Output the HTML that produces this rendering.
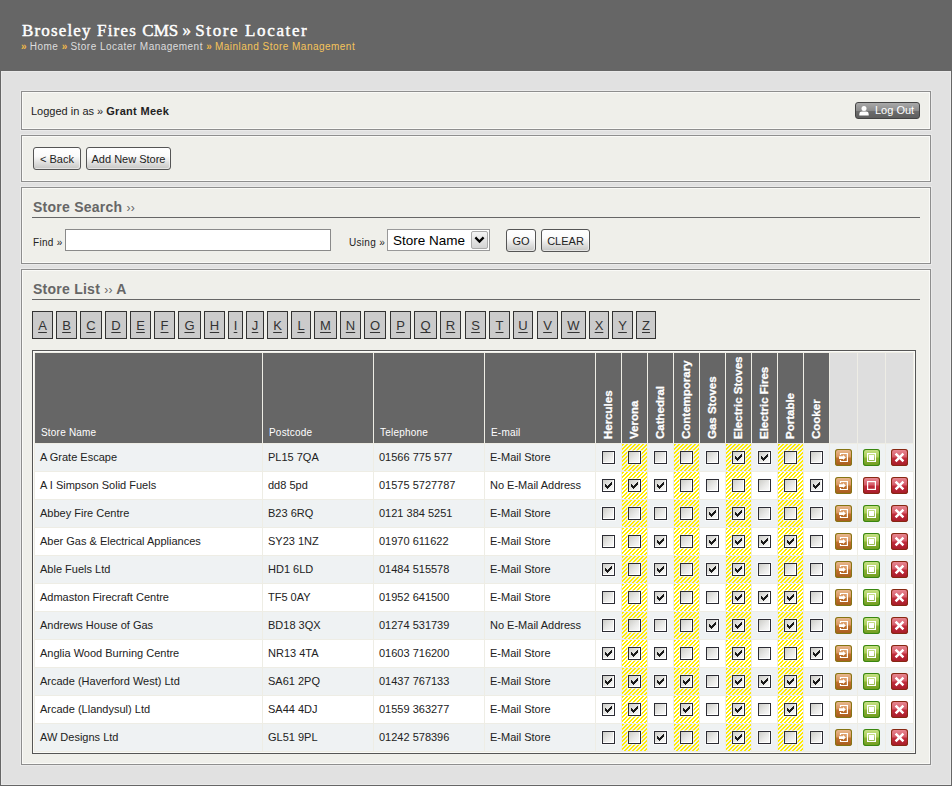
<!DOCTYPE html><html><head><meta charset="utf-8"><title>Broseley Fires CMS</title><style>
*{margin:0;padding:0;box-sizing:border-box}
html,body{width:952px;height:786px;overflow:hidden;background:#666;font-family:"Liberation Sans",sans-serif}
#hdr{position:absolute;left:0;top:0;width:952px;height:71px;background:#666}
#title{position:absolute;left:22px;top:21px;font-family:"Liberation Serif",serif;font-weight:normal;-webkit-text-stroke:0.45px #fff;font-size:17px;line-height:20px;color:#fff;letter-spacing:1.16px;white-space:nowrap}
#crumb{position:absolute;left:21px;top:41px;font-size:10px;line-height:12px;color:#ddd;letter-spacing:0.47px;white-space:nowrap}
#crumb .o{color:#f5c45a}
#crumb .r{color:#f0b84a;font-weight:bold;letter-spacing:0}
#main{position:absolute;left:1px;top:71px;width:950px;height:714px;background:#e1e1e1;box-shadow:inset 0 0 0 1px #e9e9e9}
.box{position:absolute;left:20px;width:910px;background:#efefea;border:1px solid #8e8e8e;box-shadow:0 0 0 1px #eaeaea,inset 1px 1px 0 #fafaf7,inset -1px -1px 0 #fafaf7}
#b1{top:20px;height:39px}
#b2{top:64px;height:47px}
#b3{top:116px;height:77px}
#b4{top:198px;height:496px}
#logged{position:absolute;left:9px;top:13px;font-size:11px;line-height:13px;color:#222;white-space:nowrap}
#logged b{color:#222;letter-spacing:0.3px}
#logout{position:absolute;left:833px;top:10px;width:65px;height:17px;border:1px solid #444;border-radius:3px;background:linear-gradient(#a9a9a9,#8c8c8c 50%,#6e6e6e 51%,#5e5e5e);color:#fff;font-size:11px;line-height:15px;white-space:nowrap}
#logout svg{position:absolute;left:3px;top:3px}
#logout span{position:absolute;left:19px;top:0px}
.btn{position:absolute;height:23px;border:1px solid #555;border-radius:3px;background:linear-gradient(#fff,#fafafa 40%,#c6c6c4);box-shadow:inset -1px -1px 0 rgba(255,255,255,.5);color:#222;font-size:11px;line-height:23px;text-align:center;white-space:nowrap}
#back{left:11px;top:11px;width:48px}
#addnew{left:64px;top:11px;width:85px}
.hd{position:absolute;left:11px;font-weight:bold;font-size:14px;line-height:16px;color:#666;letter-spacing:0.25px;white-space:nowrap}
.hd .rq{font-weight:normal;font-size:12px}
.hr{position:absolute;left:10px;width:888px;height:1px;background:#666}
#hd3{top:11px}
#hr3{top:29px}
.lbl{position:absolute;font-size:10px;line-height:12px;color:#222;letter-spacing:0.3px;white-space:nowrap}
#find{left:11px;top:49px}
#using{left:327px;top:49px}
#inp{position:absolute;left:43px;top:41px;width:266px;height:22px;background:#fff;border:1px solid #8a8a8a}
#sel{position:absolute;left:365px;top:41px;width:103px;height:22px;background:#fff;border:1px solid #999}
#sel span{position:absolute;left:5px;top:3px;font-size:13.5px;line-height:15px;color:#000;white-space:nowrap}
#selbtn{position:absolute;left:83px;top:1px;width:17px;height:18px;border:1px solid #aaa;border-radius:2px;background:linear-gradient(#f4f4f4,#d4d4d4)}
#selbtn svg{position:absolute;left:-1px;top:-1px}
#go{left:484px;top:41px;width:30px}
#clear{left:519px;top:41px;width:49px}
#hd4{top:11px}
#hr4{top:29px}
.lt{position:absolute;top:41px;height:28px;border:1px solid #333;background:#cbcbcb;color:#333;font-size:13px;line-height:28px;text-align:center}
.lt u{text-decoration:underline;text-underline-offset:2px}
#tbl{position:absolute;left:31px;top:279px;width:884px;height:404px;border:1px solid #555;background:#fbfbf8;padding:1px}
table{border-collapse:separate;border-spacing:1px;background:#eeede5;table-layout:fixed;width:880px}
td,th{padding:0;overflow:hidden}
tr.th th{height:90px;background:#666;color:#fff;vertical-align:bottom;text-align:left;font-weight:normal}
th.tx span{display:block;padding:0 0 4px 6px;font-size:10px;line-height:12px;letter-spacing:0.2px;white-space:nowrap}
th.vt{position:relative}
th.vt span{position:absolute;left:5px;top:86px;-webkit-text-stroke:0.3px #fff;transform-origin:0 0;transform:rotate(-90deg);font-weight:bold;font-size:11.5px;line-height:14px;white-space:nowrap}
th.ih{background:#dedede !important}
tr td{height:27px}
tr.odd td{background:#eff2f3}
tr.even td{background:#fff}
td.t{padding:7px 0 0 5px;vertical-align:top;line-height:13px;font-size:11px;color:#222;white-space:nowrap}
td.c{text-align:center;vertical-align:middle;position:relative}
td.st{background-image:repeating-linear-gradient(135deg,#ffec00 0,#ffec00 1.7px,transparent 1.7px,transparent 2.83px) !important}
.cb{display:block;position:absolute;left:6px;top:7px;width:13px;height:13px;border:1px solid #2c2c34;background:linear-gradient(135deg,#cdcdc8 0%,#e8e8e6 50%,#fdfdfd 100%);box-shadow:0 0 0 1px rgba(255,255,255,.55),inset -1px -1px 0 #fff}
.cb svg{position:absolute;left:-1px;top:-1px}
.ic{display:block;position:absolute;left:5px;top:5px;width:17px;height:17px;border-radius:3px}
.ic svg{position:absolute;left:0;top:0}
.ic-o{background:linear-gradient(#e9bb92,#d9955e 48%,#c0712f 52%,#a65b1d);box-shadow:inset 0 0 0 1px #857514}
.ic-g{background:linear-gradient(#c9e28a,#a9cc55 48%,#8cb232 52%,#6f9b22);box-shadow:inset 0 0 0 1px #38860f}
.ic-r{background:linear-gradient(#ea8c96,#d45a68 48%,#c22c3c 52%,#a51b28);box-shadow:inset 0 0 0 1px #862812}

</style></head><body>
<div id="hdr"><div id="title">Broseley Fires <span style="letter-spacing:0">CMS</span><span style="letter-spacing:0"> &raquo; </span><span style="letter-spacing:1.62px">Store Locater</span></div>
<div id="crumb"><span class="r">&raquo;</span> Home <span class="r">&raquo;</span> Store Locater Management <span class="r">&raquo;</span><span class="o"> Mainland Store Management</span></div></div>
<div id="main">
<div class="box" id="b1"><div id="logged">Logged in as &raquo; <b>Grant Meek</b></div>
<div id="logout"><svg width="10" height="10" viewBox="0 0 10 10"><ellipse cx="5" cy="2.5" rx="2.5" ry="2.5" fill="#fff"/><path d="M0.3 9.6V8Q0.3 5.6 2.8 5.6H7.2Q9.7 5.6 9.7 8V9.6Z" fill="#fff"/></svg><span>Log Out</span></div></div>
<div class="box" id="b2"><div class="btn" id="back">&lt; Back</div><div class="btn" id="addnew">Add New Store</div></div>
<div class="box" id="b3"><div class="hd" id="hd3">Store Search <span class="rq">&rsaquo;&rsaquo;</span></div><div class="hr" id="hr3"></div>
<div class="lbl" id="find">Find &raquo;</div><div id="inp"></div><div class="lbl" id="using">Using &raquo;</div>
<div id="sel"><span>Store Name</span><div id="selbtn"><svg width="16" height="18" viewBox="0 0 16 18"><path d="M5.2 7.2 L8.5 10.5 L11.8 7.2" fill="none" stroke="#000" stroke-width="2.3" stroke-linecap="square"/></svg></div></div>
<div class="btn" id="go">GO</div><div class="btn" id="clear">CLEAR</div></div>
<div class="box" id="b4"><div class="hd" id="hd4">Store List <span class="rq">&rsaquo;&rsaquo;</span> A</div><div class="hr" id="hr4"></div>
<div class="lt" style="left:10px;width:21px"><u>A</u></div>
<div class="lt" style="left:34px;width:21px"><u>B</u></div>
<div class="lt" style="left:58px;width:22px"><u>C</u></div>
<div class="lt" style="left:83px;width:22px"><u>D</u></div>
<div class="lt" style="left:108px;width:21px"><u>E</u></div>
<div class="lt" style="left:132px;width:21px"><u>F</u></div>
<div class="lt" style="left:156px;width:23px"><u>G</u></div>
<div class="lt" style="left:182px;width:21px"><u>H</u></div>
<div class="lt" style="left:206px;width:15px"><u>I</u></div>
<div class="lt" style="left:224px;width:18px"><u>J</u></div>
<div class="lt" style="left:245px;width:21px"><u>K</u></div>
<div class="lt" style="left:269px;width:20px"><u>L</u></div>
<div class="lt" style="left:292px;width:23px"><u>M</u></div>
<div class="lt" style="left:318px;width:21px"><u>N</u></div>
<div class="lt" style="left:342px;width:22px"><u>O</u></div>
<div class="lt" style="left:368px;width:21px"><u>P</u></div>
<div class="lt" style="left:392px;width:23px"><u>Q</u></div>
<div class="lt" style="left:418px;width:21px"><u>R</u></div>
<div class="lt" style="left:443px;width:21px"><u>S</u></div>
<div class="lt" style="left:467px;width:21px"><u>T</u></div>
<div class="lt" style="left:491px;width:20px"><u>U</u></div>
<div class="lt" style="left:515px;width:21px"><u>V</u></div>
<div class="lt" style="left:539px;width:25px"><u>W</u></div>
<div class="lt" style="left:567px;width:20px"><u>X</u></div>
<div class="lt" style="left:590px;width:21px"><u>Y</u></div>
<div class="lt" style="left:614px;width:20px"><u>Z</u></div>
</div>
<div id="tbl"><table cellspacing="1"><colgroup>
<col style="width:227px">
<col style="width:110px">
<col style="width:110px">
<col style="width:110px">
<col style="width:25px">
<col style="width:25px">
<col style="width:25px">
<col style="width:25px">
<col style="width:25px">
<col style="width:25px">
<col style="width:25px">
<col style="width:25px">
<col style="width:25px">
<col style="width:27px">
<col style="width:27px">
<col style="width:27px">
</colgroup><tr class="th">
<th class="tx"><span>Store Name</span></th>
<th class="tx"><span>Postcode</span></th>
<th class="tx"><span>Telephone</span></th>
<th class="tx"><span>E-mail</span></th>
<th class="vt"><span>Hercules</span></th>
<th class="vt"><span>Verona</span></th>
<th class="vt"><span>Cathedral</span></th>
<th class="vt"><span>Contemporary</span></th>
<th class="vt"><span>Gas Stoves</span></th>
<th class="vt"><span>Electric Stoves</span></th>
<th class="vt"><span>Electric Fires</span></th>
<th class="vt"><span>Portable</span></th>
<th class="vt"><span>Cooker</span></th>
<th class="ih"></th><th class="ih"></th><th class="ih"></th></tr>
<tr class="odd"><td class="t">A Grate Escape</td><td class="t">PL15 7QA</td><td class="t">01566 775 577</td><td class="t">E-Mail Store</td>
<td class="c"><span class="cb"></span></td>
<td class="c st"><span class="cb"></span></td>
<td class="c"><span class="cb"></span></td>
<td class="c st"><span class="cb"></span></td>
<td class="c"><span class="cb"></span></td>
<td class="c st"><span class="cb"><svg width="13" height="13" viewBox="0 0 13 13" shape-rendering="crispEdges"><path d="M9 3h1v3h-1v1h-1v1h-1v1h-1v1h-1v-1h-1v-1h-1v-3h1v1h1v1h1v-1h1v-1h1z" fill="#1a1a1a"/></svg></span></td>
<td class="c"><span class="cb"><svg width="13" height="13" viewBox="0 0 13 13" shape-rendering="crispEdges"><path d="M9 3h1v3h-1v1h-1v1h-1v1h-1v1h-1v-1h-1v-1h-1v-3h1v1h1v1h1v-1h1v-1h1z" fill="#1a1a1a"/></svg></span></td>
<td class="c st"><span class="cb"></span></td>
<td class="c"><span class="cb"></span></td>
<td class="c"><span class="ic ic-o"><svg width="17" height="17" viewBox="0 0 17 17"><path d="M4.9 4H13V13H4.9V11H6.1V11.9H11.8V5.1H6.1V5.9H4.9Z" fill="#fff"/><path d="M4 7.2H8V6.1L10.9 8.5L8 11V9.9H4Z" fill="#fff"/></svg></span></td><td class="c"><span class="ic ic-g"><svg width="17" height="17" viewBox="0 0 17 17"><rect x="4.6" y="4.6" width="7.8" height="7.8" fill="none" stroke="#fff" stroke-width="1.2"/><rect x="6" y="6" width="5" height="5" fill="#fff"/></svg></span></td><td class="c"><span class="ic ic-r"><svg width="17" height="17" viewBox="0 0 17 17"><path d="M4.6 4.6L12.4 12.4M12.4 4.6L4.6 12.4" stroke="#fff" stroke-width="2.5" stroke-linecap="butt"/></svg></span></td></tr>
<tr class="even"><td class="t">A I Simpson Solid Fuels</td><td class="t">dd8 5pd</td><td class="t">01575 5727787</td><td class="t">No E-Mail Address</td>
<td class="c"><span class="cb"><svg width="13" height="13" viewBox="0 0 13 13" shape-rendering="crispEdges"><path d="M9 3h1v3h-1v1h-1v1h-1v1h-1v1h-1v-1h-1v-1h-1v-3h1v1h1v1h1v-1h1v-1h1z" fill="#1a1a1a"/></svg></span></td>
<td class="c st"><span class="cb"><svg width="13" height="13" viewBox="0 0 13 13" shape-rendering="crispEdges"><path d="M9 3h1v3h-1v1h-1v1h-1v1h-1v1h-1v-1h-1v-1h-1v-3h1v1h1v1h1v-1h1v-1h1z" fill="#1a1a1a"/></svg></span></td>
<td class="c"><span class="cb"><svg width="13" height="13" viewBox="0 0 13 13" shape-rendering="crispEdges"><path d="M9 3h1v3h-1v1h-1v1h-1v1h-1v1h-1v-1h-1v-1h-1v-3h1v1h1v1h1v-1h1v-1h1z" fill="#1a1a1a"/></svg></span></td>
<td class="c st"><span class="cb"></span></td>
<td class="c"><span class="cb"></span></td>
<td class="c st"><span class="cb"></span></td>
<td class="c"><span class="cb"></span></td>
<td class="c st"><span class="cb"></span></td>
<td class="c"><span class="cb"><svg width="13" height="13" viewBox="0 0 13 13" shape-rendering="crispEdges"><path d="M9 3h1v3h-1v1h-1v1h-1v1h-1v1h-1v-1h-1v-1h-1v-3h1v1h1v1h1v-1h1v-1h1z" fill="#1a1a1a"/></svg></span></td>
<td class="c"><span class="ic ic-o"><svg width="17" height="17" viewBox="0 0 17 17"><path d="M4.9 4H13V13H4.9V11H6.1V11.9H11.8V5.1H6.1V5.9H4.9Z" fill="#fff"/><path d="M4 7.2H8V6.1L10.9 8.5L8 11V9.9H4Z" fill="#fff"/></svg></span></td><td class="c"><span class="ic ic-r"><svg width="17" height="17" viewBox="0 0 17 17"><rect x="4.6" y="4.6" width="7.8" height="7.8" fill="none" stroke="#fff" stroke-width="1.2"/></svg></span></td><td class="c"><span class="ic ic-r"><svg width="17" height="17" viewBox="0 0 17 17"><path d="M4.6 4.6L12.4 12.4M12.4 4.6L4.6 12.4" stroke="#fff" stroke-width="2.5" stroke-linecap="butt"/></svg></span></td></tr>
<tr class="odd"><td class="t">Abbey Fire Centre</td><td class="t">B23 6RQ</td><td class="t">0121 384 5251</td><td class="t">E-Mail Store</td>
<td class="c"><span class="cb"></span></td>
<td class="c st"><span class="cb"></span></td>
<td class="c"><span class="cb"></span></td>
<td class="c st"><span class="cb"></span></td>
<td class="c"><span class="cb"><svg width="13" height="13" viewBox="0 0 13 13" shape-rendering="crispEdges"><path d="M9 3h1v3h-1v1h-1v1h-1v1h-1v1h-1v-1h-1v-1h-1v-3h1v1h1v1h1v-1h1v-1h1z" fill="#1a1a1a"/></svg></span></td>
<td class="c st"><span class="cb"><svg width="13" height="13" viewBox="0 0 13 13" shape-rendering="crispEdges"><path d="M9 3h1v3h-1v1h-1v1h-1v1h-1v1h-1v-1h-1v-1h-1v-3h1v1h1v1h1v-1h1v-1h1z" fill="#1a1a1a"/></svg></span></td>
<td class="c"><span class="cb"></span></td>
<td class="c st"><span class="cb"></span></td>
<td class="c"><span class="cb"></span></td>
<td class="c"><span class="ic ic-o"><svg width="17" height="17" viewBox="0 0 17 17"><path d="M4.9 4H13V13H4.9V11H6.1V11.9H11.8V5.1H6.1V5.9H4.9Z" fill="#fff"/><path d="M4 7.2H8V6.1L10.9 8.5L8 11V9.9H4Z" fill="#fff"/></svg></span></td><td class="c"><span class="ic ic-g"><svg width="17" height="17" viewBox="0 0 17 17"><rect x="4.6" y="4.6" width="7.8" height="7.8" fill="none" stroke="#fff" stroke-width="1.2"/><rect x="6" y="6" width="5" height="5" fill="#fff"/></svg></span></td><td class="c"><span class="ic ic-r"><svg width="17" height="17" viewBox="0 0 17 17"><path d="M4.6 4.6L12.4 12.4M12.4 4.6L4.6 12.4" stroke="#fff" stroke-width="2.5" stroke-linecap="butt"/></svg></span></td></tr>
<tr class="even"><td class="t">Aber Gas &amp; Electrical Appliances</td><td class="t">SY23 1NZ</td><td class="t">01970 611622</td><td class="t">E-Mail Store</td>
<td class="c"><span class="cb"></span></td>
<td class="c st"><span class="cb"></span></td>
<td class="c"><span class="cb"><svg width="13" height="13" viewBox="0 0 13 13" shape-rendering="crispEdges"><path d="M9 3h1v3h-1v1h-1v1h-1v1h-1v1h-1v-1h-1v-1h-1v-3h1v1h1v1h1v-1h1v-1h1z" fill="#1a1a1a"/></svg></span></td>
<td class="c st"><span class="cb"></span></td>
<td class="c"><span class="cb"><svg width="13" height="13" viewBox="0 0 13 13" shape-rendering="crispEdges"><path d="M9 3h1v3h-1v1h-1v1h-1v1h-1v1h-1v-1h-1v-1h-1v-3h1v1h1v1h1v-1h1v-1h1z" fill="#1a1a1a"/></svg></span></td>
<td class="c st"><span class="cb"><svg width="13" height="13" viewBox="0 0 13 13" shape-rendering="crispEdges"><path d="M9 3h1v3h-1v1h-1v1h-1v1h-1v1h-1v-1h-1v-1h-1v-3h1v1h1v1h1v-1h1v-1h1z" fill="#1a1a1a"/></svg></span></td>
<td class="c"><span class="cb"><svg width="13" height="13" viewBox="0 0 13 13" shape-rendering="crispEdges"><path d="M9 3h1v3h-1v1h-1v1h-1v1h-1v1h-1v-1h-1v-1h-1v-3h1v1h1v1h1v-1h1v-1h1z" fill="#1a1a1a"/></svg></span></td>
<td class="c st"><span class="cb"><svg width="13" height="13" viewBox="0 0 13 13" shape-rendering="crispEdges"><path d="M9 3h1v3h-1v1h-1v1h-1v1h-1v1h-1v-1h-1v-1h-1v-3h1v1h1v1h1v-1h1v-1h1z" fill="#1a1a1a"/></svg></span></td>
<td class="c"><span class="cb"></span></td>
<td class="c"><span class="ic ic-o"><svg width="17" height="17" viewBox="0 0 17 17"><path d="M4.9 4H13V13H4.9V11H6.1V11.9H11.8V5.1H6.1V5.9H4.9Z" fill="#fff"/><path d="M4 7.2H8V6.1L10.9 8.5L8 11V9.9H4Z" fill="#fff"/></svg></span></td><td class="c"><span class="ic ic-g"><svg width="17" height="17" viewBox="0 0 17 17"><rect x="4.6" y="4.6" width="7.8" height="7.8" fill="none" stroke="#fff" stroke-width="1.2"/><rect x="6" y="6" width="5" height="5" fill="#fff"/></svg></span></td><td class="c"><span class="ic ic-r"><svg width="17" height="17" viewBox="0 0 17 17"><path d="M4.6 4.6L12.4 12.4M12.4 4.6L4.6 12.4" stroke="#fff" stroke-width="2.5" stroke-linecap="butt"/></svg></span></td></tr>
<tr class="odd"><td class="t">Able Fuels Ltd</td><td class="t">HD1 6LD</td><td class="t">01484 515578</td><td class="t">E-Mail Store</td>
<td class="c"><span class="cb"><svg width="13" height="13" viewBox="0 0 13 13" shape-rendering="crispEdges"><path d="M9 3h1v3h-1v1h-1v1h-1v1h-1v1h-1v-1h-1v-1h-1v-3h1v1h1v1h1v-1h1v-1h1z" fill="#1a1a1a"/></svg></span></td>
<td class="c st"><span class="cb"></span></td>
<td class="c"><span class="cb"><svg width="13" height="13" viewBox="0 0 13 13" shape-rendering="crispEdges"><path d="M9 3h1v3h-1v1h-1v1h-1v1h-1v1h-1v-1h-1v-1h-1v-3h1v1h1v1h1v-1h1v-1h1z" fill="#1a1a1a"/></svg></span></td>
<td class="c st"><span class="cb"></span></td>
<td class="c"><span class="cb"><svg width="13" height="13" viewBox="0 0 13 13" shape-rendering="crispEdges"><path d="M9 3h1v3h-1v1h-1v1h-1v1h-1v1h-1v-1h-1v-1h-1v-3h1v1h1v1h1v-1h1v-1h1z" fill="#1a1a1a"/></svg></span></td>
<td class="c st"><span class="cb"><svg width="13" height="13" viewBox="0 0 13 13" shape-rendering="crispEdges"><path d="M9 3h1v3h-1v1h-1v1h-1v1h-1v1h-1v-1h-1v-1h-1v-3h1v1h1v1h1v-1h1v-1h1z" fill="#1a1a1a"/></svg></span></td>
<td class="c"><span class="cb"></span></td>
<td class="c st"><span class="cb"></span></td>
<td class="c"><span class="cb"></span></td>
<td class="c"><span class="ic ic-o"><svg width="17" height="17" viewBox="0 0 17 17"><path d="M4.9 4H13V13H4.9V11H6.1V11.9H11.8V5.1H6.1V5.9H4.9Z" fill="#fff"/><path d="M4 7.2H8V6.1L10.9 8.5L8 11V9.9H4Z" fill="#fff"/></svg></span></td><td class="c"><span class="ic ic-g"><svg width="17" height="17" viewBox="0 0 17 17"><rect x="4.6" y="4.6" width="7.8" height="7.8" fill="none" stroke="#fff" stroke-width="1.2"/><rect x="6" y="6" width="5" height="5" fill="#fff"/></svg></span></td><td class="c"><span class="ic ic-r"><svg width="17" height="17" viewBox="0 0 17 17"><path d="M4.6 4.6L12.4 12.4M12.4 4.6L4.6 12.4" stroke="#fff" stroke-width="2.5" stroke-linecap="butt"/></svg></span></td></tr>
<tr class="even"><td class="t">Admaston Firecraft Centre</td><td class="t">TF5 0AY</td><td class="t">01952 641500</td><td class="t">E-Mail Store</td>
<td class="c"><span class="cb"></span></td>
<td class="c st"><span class="cb"></span></td>
<td class="c"><span class="cb"><svg width="13" height="13" viewBox="0 0 13 13" shape-rendering="crispEdges"><path d="M9 3h1v3h-1v1h-1v1h-1v1h-1v1h-1v-1h-1v-1h-1v-3h1v1h1v1h1v-1h1v-1h1z" fill="#1a1a1a"/></svg></span></td>
<td class="c st"><span class="cb"></span></td>
<td class="c"><span class="cb"></span></td>
<td class="c st"><span class="cb"><svg width="13" height="13" viewBox="0 0 13 13" shape-rendering="crispEdges"><path d="M9 3h1v3h-1v1h-1v1h-1v1h-1v1h-1v-1h-1v-1h-1v-3h1v1h1v1h1v-1h1v-1h1z" fill="#1a1a1a"/></svg></span></td>
<td class="c"><span class="cb"><svg width="13" height="13" viewBox="0 0 13 13" shape-rendering="crispEdges"><path d="M9 3h1v3h-1v1h-1v1h-1v1h-1v1h-1v-1h-1v-1h-1v-3h1v1h1v1h1v-1h1v-1h1z" fill="#1a1a1a"/></svg></span></td>
<td class="c st"><span class="cb"><svg width="13" height="13" viewBox="0 0 13 13" shape-rendering="crispEdges"><path d="M9 3h1v3h-1v1h-1v1h-1v1h-1v1h-1v-1h-1v-1h-1v-3h1v1h1v1h1v-1h1v-1h1z" fill="#1a1a1a"/></svg></span></td>
<td class="c"><span class="cb"></span></td>
<td class="c"><span class="ic ic-o"><svg width="17" height="17" viewBox="0 0 17 17"><path d="M4.9 4H13V13H4.9V11H6.1V11.9H11.8V5.1H6.1V5.9H4.9Z" fill="#fff"/><path d="M4 7.2H8V6.1L10.9 8.5L8 11V9.9H4Z" fill="#fff"/></svg></span></td><td class="c"><span class="ic ic-g"><svg width="17" height="17" viewBox="0 0 17 17"><rect x="4.6" y="4.6" width="7.8" height="7.8" fill="none" stroke="#fff" stroke-width="1.2"/><rect x="6" y="6" width="5" height="5" fill="#fff"/></svg></span></td><td class="c"><span class="ic ic-r"><svg width="17" height="17" viewBox="0 0 17 17"><path d="M4.6 4.6L12.4 12.4M12.4 4.6L4.6 12.4" stroke="#fff" stroke-width="2.5" stroke-linecap="butt"/></svg></span></td></tr>
<tr class="odd"><td class="t">Andrews House of Gas</td><td class="t">BD18 3QX</td><td class="t">01274 531739</td><td class="t">No E-Mail Address</td>
<td class="c"><span class="cb"></span></td>
<td class="c st"><span class="cb"></span></td>
<td class="c"><span class="cb"></span></td>
<td class="c st"><span class="cb"></span></td>
<td class="c"><span class="cb"><svg width="13" height="13" viewBox="0 0 13 13" shape-rendering="crispEdges"><path d="M9 3h1v3h-1v1h-1v1h-1v1h-1v1h-1v-1h-1v-1h-1v-3h1v1h1v1h1v-1h1v-1h1z" fill="#1a1a1a"/></svg></span></td>
<td class="c st"><span class="cb"><svg width="13" height="13" viewBox="0 0 13 13" shape-rendering="crispEdges"><path d="M9 3h1v3h-1v1h-1v1h-1v1h-1v1h-1v-1h-1v-1h-1v-3h1v1h1v1h1v-1h1v-1h1z" fill="#1a1a1a"/></svg></span></td>
<td class="c"><span class="cb"></span></td>
<td class="c st"><span class="cb"><svg width="13" height="13" viewBox="0 0 13 13" shape-rendering="crispEdges"><path d="M9 3h1v3h-1v1h-1v1h-1v1h-1v1h-1v-1h-1v-1h-1v-3h1v1h1v1h1v-1h1v-1h1z" fill="#1a1a1a"/></svg></span></td>
<td class="c"><span class="cb"></span></td>
<td class="c"><span class="ic ic-o"><svg width="17" height="17" viewBox="0 0 17 17"><path d="M4.9 4H13V13H4.9V11H6.1V11.9H11.8V5.1H6.1V5.9H4.9Z" fill="#fff"/><path d="M4 7.2H8V6.1L10.9 8.5L8 11V9.9H4Z" fill="#fff"/></svg></span></td><td class="c"><span class="ic ic-g"><svg width="17" height="17" viewBox="0 0 17 17"><rect x="4.6" y="4.6" width="7.8" height="7.8" fill="none" stroke="#fff" stroke-width="1.2"/><rect x="6" y="6" width="5" height="5" fill="#fff"/></svg></span></td><td class="c"><span class="ic ic-r"><svg width="17" height="17" viewBox="0 0 17 17"><path d="M4.6 4.6L12.4 12.4M12.4 4.6L4.6 12.4" stroke="#fff" stroke-width="2.5" stroke-linecap="butt"/></svg></span></td></tr>
<tr class="even"><td class="t">Anglia Wood Burning Centre</td><td class="t">NR13 4TA</td><td class="t">01603 716200</td><td class="t">E-Mail Store</td>
<td class="c"><span class="cb"><svg width="13" height="13" viewBox="0 0 13 13" shape-rendering="crispEdges"><path d="M9 3h1v3h-1v1h-1v1h-1v1h-1v1h-1v-1h-1v-1h-1v-3h1v1h1v1h1v-1h1v-1h1z" fill="#1a1a1a"/></svg></span></td>
<td class="c st"><span class="cb"><svg width="13" height="13" viewBox="0 0 13 13" shape-rendering="crispEdges"><path d="M9 3h1v3h-1v1h-1v1h-1v1h-1v1h-1v-1h-1v-1h-1v-3h1v1h1v1h1v-1h1v-1h1z" fill="#1a1a1a"/></svg></span></td>
<td class="c"><span class="cb"><svg width="13" height="13" viewBox="0 0 13 13" shape-rendering="crispEdges"><path d="M9 3h1v3h-1v1h-1v1h-1v1h-1v1h-1v-1h-1v-1h-1v-3h1v1h1v1h1v-1h1v-1h1z" fill="#1a1a1a"/></svg></span></td>
<td class="c st"><span class="cb"></span></td>
<td class="c"><span class="cb"></span></td>
<td class="c st"><span class="cb"><svg width="13" height="13" viewBox="0 0 13 13" shape-rendering="crispEdges"><path d="M9 3h1v3h-1v1h-1v1h-1v1h-1v1h-1v-1h-1v-1h-1v-3h1v1h1v1h1v-1h1v-1h1z" fill="#1a1a1a"/></svg></span></td>
<td class="c"><span class="cb"></span></td>
<td class="c st"><span class="cb"></span></td>
<td class="c"><span class="cb"><svg width="13" height="13" viewBox="0 0 13 13" shape-rendering="crispEdges"><path d="M9 3h1v3h-1v1h-1v1h-1v1h-1v1h-1v-1h-1v-1h-1v-3h1v1h1v1h1v-1h1v-1h1z" fill="#1a1a1a"/></svg></span></td>
<td class="c"><span class="ic ic-o"><svg width="17" height="17" viewBox="0 0 17 17"><path d="M4.9 4H13V13H4.9V11H6.1V11.9H11.8V5.1H6.1V5.9H4.9Z" fill="#fff"/><path d="M4 7.2H8V6.1L10.9 8.5L8 11V9.9H4Z" fill="#fff"/></svg></span></td><td class="c"><span class="ic ic-g"><svg width="17" height="17" viewBox="0 0 17 17"><rect x="4.6" y="4.6" width="7.8" height="7.8" fill="none" stroke="#fff" stroke-width="1.2"/><rect x="6" y="6" width="5" height="5" fill="#fff"/></svg></span></td><td class="c"><span class="ic ic-r"><svg width="17" height="17" viewBox="0 0 17 17"><path d="M4.6 4.6L12.4 12.4M12.4 4.6L4.6 12.4" stroke="#fff" stroke-width="2.5" stroke-linecap="butt"/></svg></span></td></tr>
<tr class="odd"><td class="t">Arcade (Haverford West) Ltd</td><td class="t">SA61 2PQ</td><td class="t">01437 767133</td><td class="t">E-Mail Store</td>
<td class="c"><span class="cb"><svg width="13" height="13" viewBox="0 0 13 13" shape-rendering="crispEdges"><path d="M9 3h1v3h-1v1h-1v1h-1v1h-1v1h-1v-1h-1v-1h-1v-3h1v1h1v1h1v-1h1v-1h1z" fill="#1a1a1a"/></svg></span></td>
<td class="c st"><span class="cb"><svg width="13" height="13" viewBox="0 0 13 13" shape-rendering="crispEdges"><path d="M9 3h1v3h-1v1h-1v1h-1v1h-1v1h-1v-1h-1v-1h-1v-3h1v1h1v1h1v-1h1v-1h1z" fill="#1a1a1a"/></svg></span></td>
<td class="c"><span class="cb"><svg width="13" height="13" viewBox="0 0 13 13" shape-rendering="crispEdges"><path d="M9 3h1v3h-1v1h-1v1h-1v1h-1v1h-1v-1h-1v-1h-1v-3h1v1h1v1h1v-1h1v-1h1z" fill="#1a1a1a"/></svg></span></td>
<td class="c st"><span class="cb"><svg width="13" height="13" viewBox="0 0 13 13" shape-rendering="crispEdges"><path d="M9 3h1v3h-1v1h-1v1h-1v1h-1v1h-1v-1h-1v-1h-1v-3h1v1h1v1h1v-1h1v-1h1z" fill="#1a1a1a"/></svg></span></td>
<td class="c"><span class="cb"></span></td>
<td class="c st"><span class="cb"><svg width="13" height="13" viewBox="0 0 13 13" shape-rendering="crispEdges"><path d="M9 3h1v3h-1v1h-1v1h-1v1h-1v1h-1v-1h-1v-1h-1v-3h1v1h1v1h1v-1h1v-1h1z" fill="#1a1a1a"/></svg></span></td>
<td class="c"><span class="cb"><svg width="13" height="13" viewBox="0 0 13 13" shape-rendering="crispEdges"><path d="M9 3h1v3h-1v1h-1v1h-1v1h-1v1h-1v-1h-1v-1h-1v-3h1v1h1v1h1v-1h1v-1h1z" fill="#1a1a1a"/></svg></span></td>
<td class="c st"><span class="cb"><svg width="13" height="13" viewBox="0 0 13 13" shape-rendering="crispEdges"><path d="M9 3h1v3h-1v1h-1v1h-1v1h-1v1h-1v-1h-1v-1h-1v-3h1v1h1v1h1v-1h1v-1h1z" fill="#1a1a1a"/></svg></span></td>
<td class="c"><span class="cb"><svg width="13" height="13" viewBox="0 0 13 13" shape-rendering="crispEdges"><path d="M9 3h1v3h-1v1h-1v1h-1v1h-1v1h-1v-1h-1v-1h-1v-3h1v1h1v1h1v-1h1v-1h1z" fill="#1a1a1a"/></svg></span></td>
<td class="c"><span class="ic ic-o"><svg width="17" height="17" viewBox="0 0 17 17"><path d="M4.9 4H13V13H4.9V11H6.1V11.9H11.8V5.1H6.1V5.9H4.9Z" fill="#fff"/><path d="M4 7.2H8V6.1L10.9 8.5L8 11V9.9H4Z" fill="#fff"/></svg></span></td><td class="c"><span class="ic ic-g"><svg width="17" height="17" viewBox="0 0 17 17"><rect x="4.6" y="4.6" width="7.8" height="7.8" fill="none" stroke="#fff" stroke-width="1.2"/><rect x="6" y="6" width="5" height="5" fill="#fff"/></svg></span></td><td class="c"><span class="ic ic-r"><svg width="17" height="17" viewBox="0 0 17 17"><path d="M4.6 4.6L12.4 12.4M12.4 4.6L4.6 12.4" stroke="#fff" stroke-width="2.5" stroke-linecap="butt"/></svg></span></td></tr>
<tr class="even"><td class="t">Arcade (Llandysul) Ltd</td><td class="t">SA44 4DJ</td><td class="t">01559 363277</td><td class="t">E-Mail Store</td>
<td class="c"><span class="cb"><svg width="13" height="13" viewBox="0 0 13 13" shape-rendering="crispEdges"><path d="M9 3h1v3h-1v1h-1v1h-1v1h-1v1h-1v-1h-1v-1h-1v-3h1v1h1v1h1v-1h1v-1h1z" fill="#1a1a1a"/></svg></span></td>
<td class="c st"><span class="cb"><svg width="13" height="13" viewBox="0 0 13 13" shape-rendering="crispEdges"><path d="M9 3h1v3h-1v1h-1v1h-1v1h-1v1h-1v-1h-1v-1h-1v-3h1v1h1v1h1v-1h1v-1h1z" fill="#1a1a1a"/></svg></span></td>
<td class="c"><span class="cb"></span></td>
<td class="c st"><span class="cb"><svg width="13" height="13" viewBox="0 0 13 13" shape-rendering="crispEdges"><path d="M9 3h1v3h-1v1h-1v1h-1v1h-1v1h-1v-1h-1v-1h-1v-3h1v1h1v1h1v-1h1v-1h1z" fill="#1a1a1a"/></svg></span></td>
<td class="c"><span class="cb"></span></td>
<td class="c st"><span class="cb"><svg width="13" height="13" viewBox="0 0 13 13" shape-rendering="crispEdges"><path d="M9 3h1v3h-1v1h-1v1h-1v1h-1v1h-1v-1h-1v-1h-1v-3h1v1h1v1h1v-1h1v-1h1z" fill="#1a1a1a"/></svg></span></td>
<td class="c"><span class="cb"></span></td>
<td class="c st"><span class="cb"><svg width="13" height="13" viewBox="0 0 13 13" shape-rendering="crispEdges"><path d="M9 3h1v3h-1v1h-1v1h-1v1h-1v1h-1v-1h-1v-1h-1v-3h1v1h1v1h1v-1h1v-1h1z" fill="#1a1a1a"/></svg></span></td>
<td class="c"><span class="cb"></span></td>
<td class="c"><span class="ic ic-o"><svg width="17" height="17" viewBox="0 0 17 17"><path d="M4.9 4H13V13H4.9V11H6.1V11.9H11.8V5.1H6.1V5.9H4.9Z" fill="#fff"/><path d="M4 7.2H8V6.1L10.9 8.5L8 11V9.9H4Z" fill="#fff"/></svg></span></td><td class="c"><span class="ic ic-g"><svg width="17" height="17" viewBox="0 0 17 17"><rect x="4.6" y="4.6" width="7.8" height="7.8" fill="none" stroke="#fff" stroke-width="1.2"/><rect x="6" y="6" width="5" height="5" fill="#fff"/></svg></span></td><td class="c"><span class="ic ic-r"><svg width="17" height="17" viewBox="0 0 17 17"><path d="M4.6 4.6L12.4 12.4M12.4 4.6L4.6 12.4" stroke="#fff" stroke-width="2.5" stroke-linecap="butt"/></svg></span></td></tr>
<tr class="odd"><td class="t">AW Designs Ltd</td><td class="t">GL51 9PL</td><td class="t">01242 578396</td><td class="t">E-Mail Store</td>
<td class="c"><span class="cb"></span></td>
<td class="c st"><span class="cb"></span></td>
<td class="c"><span class="cb"><svg width="13" height="13" viewBox="0 0 13 13" shape-rendering="crispEdges"><path d="M9 3h1v3h-1v1h-1v1h-1v1h-1v1h-1v-1h-1v-1h-1v-3h1v1h1v1h1v-1h1v-1h1z" fill="#1a1a1a"/></svg></span></td>
<td class="c st"><span class="cb"></span></td>
<td class="c"><span class="cb"></span></td>
<td class="c st"><span class="cb"><svg width="13" height="13" viewBox="0 0 13 13" shape-rendering="crispEdges"><path d="M9 3h1v3h-1v1h-1v1h-1v1h-1v1h-1v-1h-1v-1h-1v-3h1v1h1v1h1v-1h1v-1h1z" fill="#1a1a1a"/></svg></span></td>
<td class="c"><span class="cb"></span></td>
<td class="c st"><span class="cb"></span></td>
<td class="c"><span class="cb"></span></td>
<td class="c"><span class="ic ic-o"><svg width="17" height="17" viewBox="0 0 17 17"><path d="M4.9 4H13V13H4.9V11H6.1V11.9H11.8V5.1H6.1V5.9H4.9Z" fill="#fff"/><path d="M4 7.2H8V6.1L10.9 8.5L8 11V9.9H4Z" fill="#fff"/></svg></span></td><td class="c"><span class="ic ic-g"><svg width="17" height="17" viewBox="0 0 17 17"><rect x="4.6" y="4.6" width="7.8" height="7.8" fill="none" stroke="#fff" stroke-width="1.2"/><rect x="6" y="6" width="5" height="5" fill="#fff"/></svg></span></td><td class="c"><span class="ic ic-r"><svg width="17" height="17" viewBox="0 0 17 17"><path d="M4.6 4.6L12.4 12.4M12.4 4.6L4.6 12.4" stroke="#fff" stroke-width="2.5" stroke-linecap="butt"/></svg></span></td></tr>
</table></div>
</div></body></html>
